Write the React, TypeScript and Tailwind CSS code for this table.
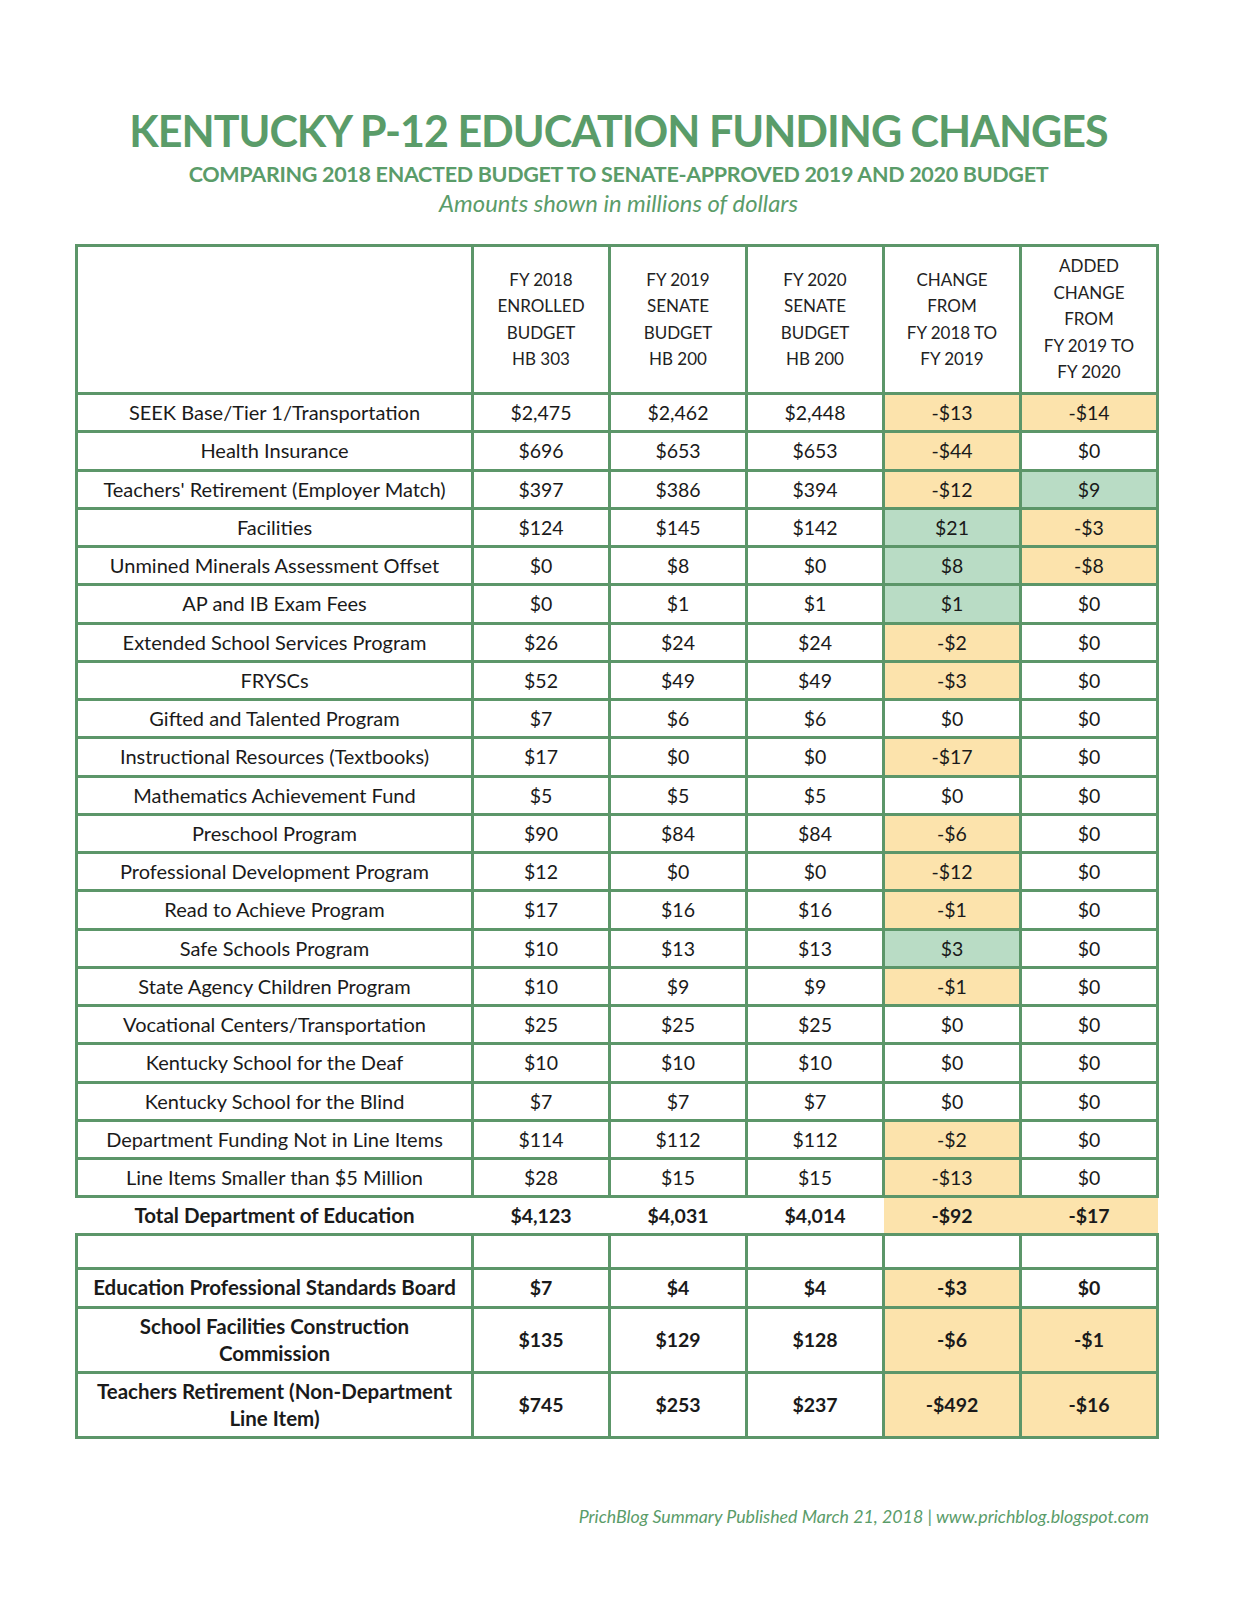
type Row = {
  label: string[];
  values: string[];
  tall?: boolean;
};

const rows: Row[] = [
  { label: ["SEEK Base/Tier 1/Transportation"], values: ["$2,475", "$2,462", "$2,448", "-$13", "-$14"] },
  { label: ["Health Insurance"], values: ["$696", "$653", "$653", "-$44", "$0"] },
  { label: ["Teachers' Retirement (Employer Match)"], values: ["$397", "$386", "$394", "-$12", "$9"] },
  { label: ["Facilities"], values: ["$124", "$145", "$142", "$21", "-$3"] },
  { label: ["Unmined Minerals Assessment Offset"], values: ["$0", "$8", "$0", "$8", "-$8"] },
  { label: ["AP and IB Exam Fees"], values: ["$0", "$1", "$1", "$1", "$0"] },
  { label: ["Extended School Services Program"], values: ["$26", "$24", "$24", "-$2", "$0"] },
  { label: ["FRYSCs"], values: ["$52", "$49", "$49", "-$3", "$0"] },
  { label: ["Gifted and Talented Program"], values: ["$7", "$6", "$6", "$0", "$0"] },
  { label: ["Instructional Resources (Textbooks)"], values: ["$17", "$0", "$0", "-$17", "$0"] },
  { label: ["Mathematics Achievement Fund"], values: ["$5", "$5", "$5", "$0", "$0"] },
  { label: ["Preschool Program"], values: ["$90", "$84", "$84", "-$6", "$0"] },
  { label: ["Professional Development Program"], values: ["$12", "$0", "$0", "-$12", "$0"] },
  { label: ["Read to Achieve Program"], values: ["$17", "$16", "$16", "-$1", "$0"] },
  { label: ["Safe Schools Program"], values: ["$10", "$13", "$13", "$3", "$0"] },
  { label: ["State Agency Children Program"], values: ["$10", "$9", "$9", "-$1", "$0"] },
  { label: ["Vocational Centers/Transportation"], values: ["$25", "$25", "$25", "$0", "$0"] },
  { label: ["Kentucky School for the Deaf"], values: ["$10", "$10", "$10", "$0", "$0"] },
  { label: ["Kentucky School for the Blind"], values: ["$7", "$7", "$7", "$0", "$0"] },
  { label: ["Department Funding Not in Line Items"], values: ["$114", "$112", "$112", "-$2", "$0"] },
  { label: ["Line Items Smaller than $5 Million"], values: ["$28", "$15", "$15", "-$13", "$0"] },
];

const otherRows: Row[] = [
  { label: ["Education Professional Standards Board"], values: ["$7", "$4", "$4", "-$3", "$0"] },
  { label: ["School Facilities Construction", "Commission"], values: ["$135", "$129", "$128", "-$6", "-$1"], tall: true },
  { label: ["Teachers Retirement (Non-Department", "Line Item)"], values: ["$745", "$253", "$237", "-$492", "-$16"], tall: true },
];

const headers = [
  ["FY 2018", "ENROLLED", "BUDGET", "HB 303"],
  ["FY 2019", "SENATE", "BUDGET", "HB 200"],
  ["FY 2020", "SENATE", "BUDGET", "HB 200"],
  ["CHANGE", "FROM", "FY 2018 TO", "FY 2019"],
  ["ADDED", "CHANGE", "FROM", "FY 2019 TO", "FY 2020"],
];

// change columns get tinted: orange for cuts, green for increases
function fill(value: string, idx: number) {
  if (idx < 3) return "";
  if (value.startsWith("-")) return "bg-[#fce3ac]";
  if (value === "$0") return "";
  return "bg-[#b9dcc5]";
}

const cell = "border-[3px] border-[#5c9669] text-center align-middle p-0";

function DataRow({ row, bold }: { row: Row; bold?: boolean }) {
  return (
    <tr className={`${bold ? "font-bold" : ""} ${row.tall ? "h-[65px]" : "h-[38.25px]"}`}>
      <td className={`${cell} px-1 leading-[27px] ${bold ? "text-[20.5px]" : "text-[20px]"}`}>
        {row.label.map((l) => (
          <div key={l}>{l}</div>
        ))}
      </td>
      {row.values.map((v, i) => (
        <td key={i} className={`${cell} ${fill(v, i)}`}>
          {v}
        </td>
      ))}
    </tr>
  );
}

export default function App() {
  return (
    <div className="min-h-[1600px] w-full bg-white font-['Lato',sans-serif] text-[#1a1a1a]">
      <div className="flex flex-col items-center pt-[104px] text-[#5a9c69]">
        <h1 className="text-[43px] font-bold leading-[54px] tracking-[-1px]">
          KENTUCKY P-12 EDUCATION FUNDING CHANGES
        </h1>
        <p className="mt-[2px] text-[21.5px] font-bold leading-[28px] tracking-[-0.3px]">
          COMPARING 2018 ENACTED BUDGET TO SENATE-APPROVED 2019 AND 2020 BUDGET
        </p>
        <p className="text-[23.8px] italic leading-[30px]">Amounts shown in millions of dollars</p>
      </div>

      <table className="mt-[26px] ml-[75px] w-[1081px] table-fixed border-collapse text-[19.5px]">
        <colgroup>
          <col className="w-[396px]" />
          <col className="w-[137px]" />
          <col className="w-[137px]" />
          <col className="w-[137px]" />
          <col className="w-[137px]" />
          <col className="w-[137px]" />
        </colgroup>
        <tbody>
          <tr className="h-[148px]">
            <td className={cell}></td>
            {headers.map((lines, i) => (
              <td key={i} className={`${cell} text-[17px] leading-[26.5px] text-[#222]`}>
                {lines.map((l) => (
                  <div key={l}>{l}</div>
                ))}
              </td>
            ))}
          </tr>
          {rows.map((r) => (
            <DataRow key={r.label[0]} row={r} />
          ))}
          <tr className="h-[38px] font-bold">
            <td className="text-center p-0 text-[20.5px]">Total Department of Education</td>
            <td className="text-center p-0">$4,123</td>
            <td className="text-center p-0">$4,031</td>
            <td className="text-center p-0">$4,014</td>
            <td className="text-center p-0 bg-[#fce3ac]">-$92</td>
            <td className="text-center p-0 bg-[#fce3ac]">-$17</td>
          </tr>
          <tr className="h-[34px]">
            {[0, 1, 2, 3, 4, 5].map((i) => (
              <td key={i} className={cell}></td>
            ))}
          </tr>
          {otherRows.map((r) => (
            <DataRow key={r.label[0]} row={r} bold />
          ))}
        </tbody>
      </table>

      <div className="mt-[64px] w-[1149px] text-right text-[17.8px] italic text-[#5a9c69]">
        PrichBlog Summary Published March 21, 2018 | www.prichblog.blogspot.com
      </div>
    </div>
  );
}
